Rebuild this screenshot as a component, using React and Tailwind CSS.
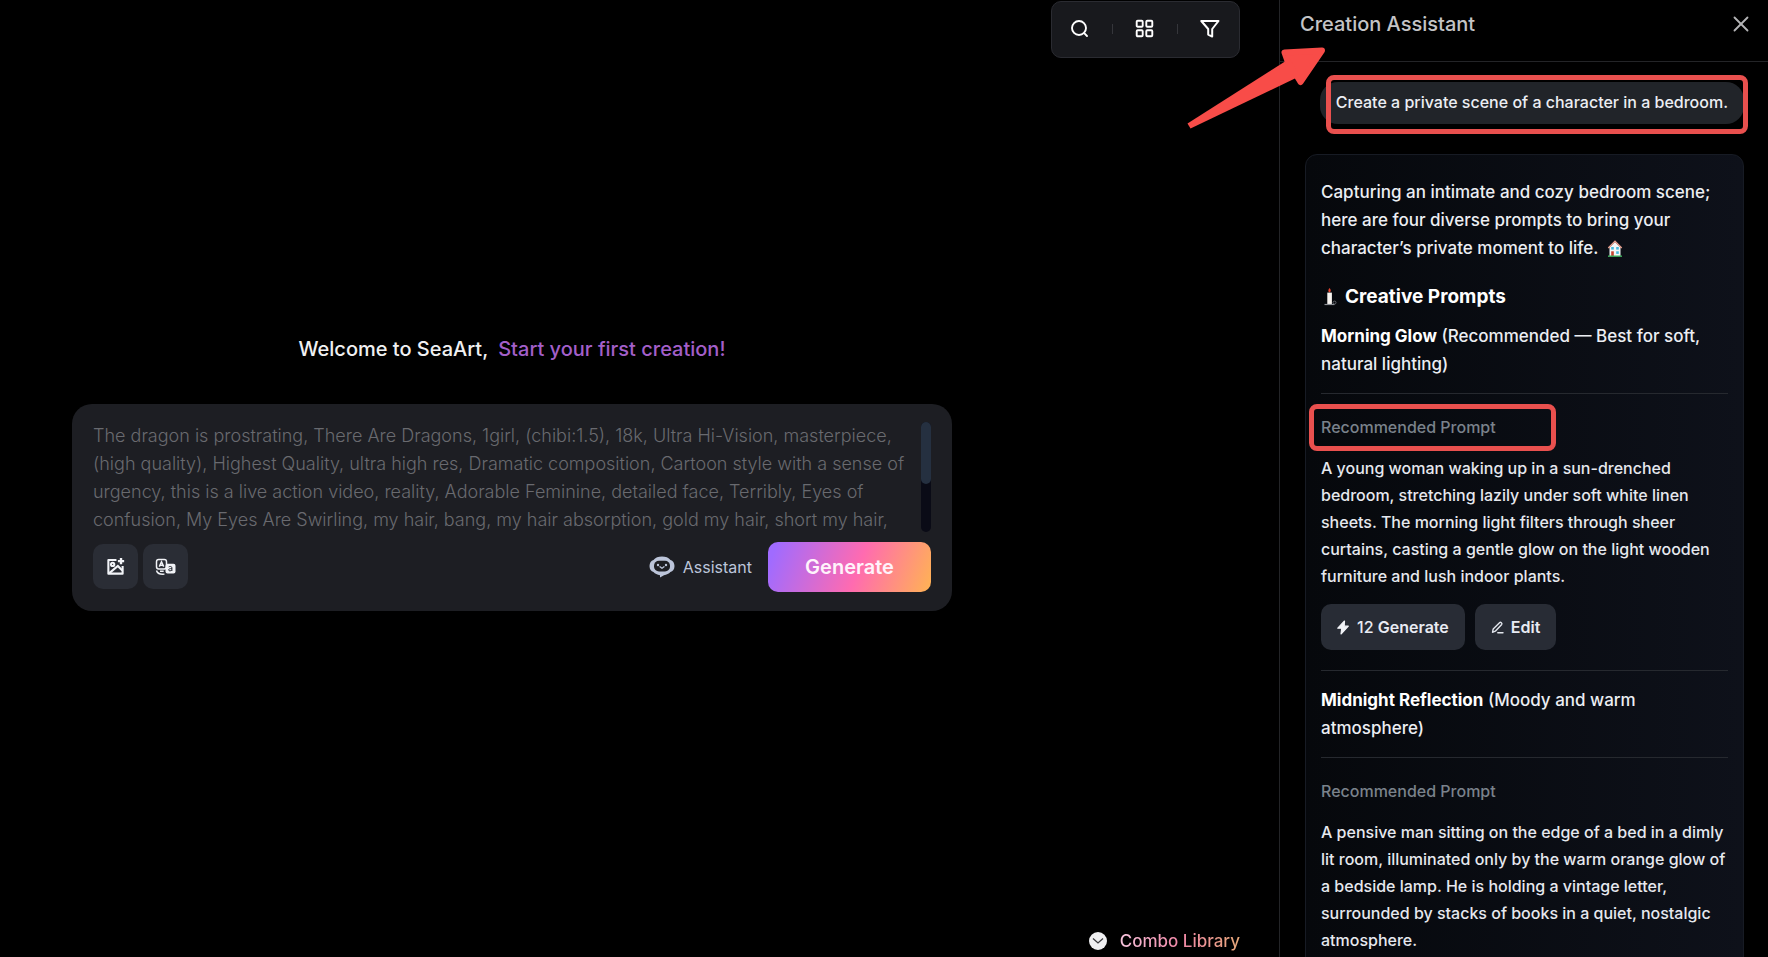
import React, { useState } from "react";
import { X } from "lucide-react";

const placeholder =
  "The dragon is prostrating, There Are Dragons, 1girl, (chibi:1.5), 18k, Ultra Hi-Vision, masterpiece, (high quality), Highest Quality, ultra high res, Dramatic composition, Cartoon style with a sense of urgency, this is a live action video, reality, Adorable Feminine, detailed face, Terribly, Eyes of confusion, My Eyes Are Swirling, my hair, bang, my hair absorption, gold my hair, short my hair,";

const SearchIcon = () => (
  <svg width="20" height="20" viewBox="0 0 20 20" fill="none" stroke="#fff" strokeWidth="1.9" strokeLinecap="round">
    <circle cx="9" cy="9" r="7" />
    <path d="M14.2 14.2 17 17" />
  </svg>
);

const GridIcon = () => (
  <svg width="20" height="20" viewBox="0 0 20 20" fill="none" stroke="#fff" strokeWidth="1.9">
    <rect x="1.7" y="1.7" width="6" height="6" rx="1" />
    <rect x="11.3" y="1.7" width="6" height="6" rx="1" />
    <rect x="1.7" y="11.3" width="6" height="6" rx="1" />
    <rect x="11.3" y="11.3" width="6" height="6" rx="1" />
  </svg>
);

const FilterIcon = () => (
  <svg width="20" height="20" viewBox="0 0 20 20" fill="none" stroke="#fff" strokeWidth="2" strokeLinejoin="round">
    <path d="M1.3 2h17.2l-6.3 8v7.600l-4-2V10z" />
  </svg>
);

const ImagePlusIcon = () => (
  <svg width="19" height="19" viewBox="0 0 20 20" fill="none" stroke="#f1f3f7" strokeWidth="2.2">
    <path d="M11 3.2H2.5v14.300h15V9.500" strokeLinejoin="round" />
    <circle cx="7" cy="7.800" r="1.700" />
    <path d="M3.500 17 12.500 9.500 17.200 14.200" />
    <path d="M15.800 1v6.600M12.500 4.300h6.600" strokeWidth="2.500" />
  </svg>
);

const TranslateIcon = () => (
  <svg width="22" height="18" viewBox="0 0 22 18" fill="none">
    <rect x="1.500" y="1.500" width="10" height="9.500" rx="2.200" stroke="#f1f3f7" strokeWidth="1.500" />
    <path d="M4.300 8.600 6.500 3.800l2.200 4.800M5.100 7.200h2.800" stroke="#f1f3f7" strokeWidth="1.500" />
    <rect x="10.500" y="5.800" width="10" height="9.600" rx="2" fill="#f1f3f7" />
    <path d="M13.700 8.900c1-.7 3.200-.7 3.200.9v3.200M16.900 10.600c-2-.1-3.300.3-3.300 1.300 0 1.300 2.400 1.300 3.300 0" stroke="#2a2d35" strokeWidth="1" />
    <path d="M1.500 12.500c.5 2.400 3.500 4 8 3.600M8.700 13.200H5" stroke="#f1f3f7" strokeWidth="1.400" />
  </svg>
);

const RobotIcon = () => (
  <svg width="26" height="22" viewBox="0 0 26 22">
    <path
      d="M13 .6c3.600 0 6.700 1.200 8.500 3.300 2.400.6 4 3 4 6.100s-1.600 5.400-4.100 6.100c-1.500 1.700-3.800 2.800-6.400 3.200L11 21.600V19.300c-2.700-.4-5-1.500-6.500-3.200C2.100 15.400.5 13.100.5 10s1.600-5.500 4-6.100C6.300 1.800 9.400.6 13 .6z"
      fill="#bcc5da"
    />
    <rect x="5" y="4.700" width="16" height="10.800" rx="5" fill="#1d1e23" />
    <circle cx="9" cy="9" r="1.200" fill="#bcc5da" />
    <circle cx="17" cy="9" r="1.200" fill="#bcc5da" />
    <path d="M11 10.800 13 12.300 15 10.800" stroke="#bcc5da" strokeWidth="1.400" fill="none" strokeLinecap="round" strokeLinejoin="round" />
  </svg>
);

const BoltIcon = () => (
  <svg width="12" height="15" viewBox="0 0 12 15" fill="#f1f3f7" stroke="#f1f3f7" strokeWidth="1.200" strokeLinejoin="round">
    <path d="M7.500 1 .8 8.200h4L4 14 11.300 6.200H7.200z" />
  </svg>
);

const PencilIcon = () => (
  <svg width="13" height="13" viewBox="0 0 13 13" fill="none" stroke="#e2e5ec" strokeWidth="1.400" strokeLinejoin="round" strokeLinecap="round">
    <path d="M1.500 11.300 2.200 8 8.800 1.500c.8-.7 2.700.9 1.900 1.900L4.300 10.200z" />
    <path d="M6.800 11.800H12" />
  </svg>
);

const HouseIcon = () => (
  <svg width="16" height="17" viewBox="0 0 16 17" className="ml-1 inline-block align-[-3px]">
    <path d="M2.500 7.500 8 2l5.500 5.500V16h-11z" fill="#f4f6f6" />
    <path d="M1.300 8 8 1.200 14.700 8" stroke="#e9a08f" strokeWidth="1.400" fill="none" />
    <rect x="4.200" y="7" width="2.600" height="2.600" fill="#47b8dc" />
    <rect x="9.200" y="7" width="2.600" height="2.600" fill="#47b8dc" />
    <rect x="4.200" y="11.300" width="2.600" height="4.700" fill="#c8412f" />
    <rect x="9.200" y="11.300" width="2.600" height="2.600" fill="#47b8dc" />
    <path d="M1 16.200h14" stroke="#3fae5c" strokeWidth="1.400" />
  </svg>
);

const CandleIcon = () => (
  <svg width="16" height="18" viewBox="0 0 16 18">
    <path d="M8.500 0c1.600 1.800 1.700 3.600 0 4.400-1.700-.8-1.400-2.600 0-4.400z" fill="#e5452f" />
    <rect x="6.300" y="4.600" width="4.600" height="11.400" fill="#f7f3ef" />
    <path d="M3.500 16.500h10" stroke="#8c8f95" strokeWidth="1.200" />
    <circle cx="13.500" cy="14.600" r="1.500" stroke="#74777d" strokeWidth=".8" fill="none" />
  </svg>
);

const HighlightBox = ({ className }) => (
  <span className={`pointer-events-none absolute rounded-lg border-[5px] border-[#e9504e] ${className}`} />
);

const Toolbar = () => (
  <div className="mt-px flex h-[57px] items-center gap-[22px] rounded-[10px] border border-[#2a2b31] bg-[#18191d] pr-[19px] pb-[2px] pl-[18px]">
    <button aria-label="Search">
      <SearchIcon />
    </button>
    <span className="h-[10px] w-px bg-[#35363b]" />
    <button aria-label="Layout">
      <GridIcon />
    </button>
    <span className="h-[10px] w-px bg-[#35363b]" />
    <button aria-label="Filter">
      <FilterIcon />
    </button>
  </div>
);

const PromptBox = () => {
  const [prompt, setPrompt] = useState("");

  return (
    <div className="w-full rounded-[20px] bg-[#1d1e23] px-[21px] pt-[18px] pb-[19px]">
      <div className="flex h-[110px]">
        <textarea
          aria-label="Prompt"
          value={prompt}
          onChange={(e) => setPrompt(e.target.value)}
          placeholder={placeholder}
          className="h-full min-w-0 flex-1 resize-none overflow-hidden bg-transparent text-[18px] leading-[28px] font-light text-gray-100 outline-none placeholder:text-[#696a6f]"
        />
        <div className="h-full w-[10px] rounded-full bg-[#0a0b16]">
          <div className="h-[62px] rounded-full bg-[#253040]" />
        </div>
      </div>
      <div className="mt-[10px] flex items-center">
        <div className="flex gap-[5px]">
          <button aria-label="Add image" className="flex size-[45px] items-center justify-center rounded-[10px] bg-[#2a2d35]">
            <ImagePlusIcon />
          </button>
          <button aria-label="Translate" className="flex size-[45px] items-center justify-center rounded-[10px] bg-[#2a2d35]">
            <TranslateIcon />
          </button>
        </div>
        <button className="ml-auto flex items-center gap-2 text-[16px] text-[#bcc5da]">
          <RobotIcon />
          Assistant
        </button>
        <button className="ml-4 h-[50px] w-[163px] rounded-[10px] bg-[linear-gradient(110deg,#a06bff_5%,#ff6bb0_55%,#ffb057_98%)] text-[20px] font-semibold text-[#fff3fb]">
          Generate
        </button>
      </div>
    </div>
  );
};

const Suggestion = ({ title, note, text, highlighted, actions }) => (
  <section>
    <h4 className="text-[17px] leading-[28px] font-medium text-[#eceef3]">
      <strong className="font-bold text-white">{title}</strong> <span>{note}</span>
    </h4>
    <hr className="mt-[15px] border-[#26292f]" />
    <div className="relative mt-[21px]">
      <p className="text-[16px] leading-[24px] font-medium text-[#7a828b]">Recommended Prompt</p>
      {highlighted && <HighlightBox className="-top-[11px] -left-3 h-[47px] w-[247px]" />}
    </div>
    <p className="mt-4 text-[16px] leading-[27px] font-medium text-[#e6e8ee]">{text}</p>
    {actions && (
      <div className="mt-[14px] flex gap-[10px]">
        <button className="flex h-[46px] items-center gap-2 rounded-[10px] bg-[#282c35] px-4 text-[16px] font-medium text-[#e8ebf3]">
          <BoltIcon />
          <span>
            12 <span className="font-semibold">Generate</span>
          </span>
        </button>
        <button className="flex h-[46px] items-center gap-[7px] rounded-[10px] bg-[#282c35] px-4 text-[16px] font-semibold text-[#e8ebf3]">
          <PencilIcon />
          Edit
        </button>
      </div>
    )}
  </section>
);

const AssistantPanel = () => (
  <aside className="flex w-[489px] shrink-0 flex-col border-l border-[#232427]">
    <header className="relative flex h-[62px] shrink-0 items-center justify-between border-b border-[#232427] pr-[14px] pb-[14px] pl-5">
      <h2 className="text-[20px] leading-7 font-medium text-[#c4c4c6]">Creation Assistant</h2>
      <button aria-label="Close" className="text-[#b4b4b6]">
        <X size={26} strokeWidth={1.7} />
      </button>
      <svg
        width="140"
        height="84"
        viewBox="0 0 140 84"
        className="pointer-events-none absolute top-[46px] -left-[93px] z-10"
        fill="#f84c48"
        stroke="#f84c48"
      >
        <path d="M.5 77.500 98 15.500 110 31.500 3.500 82.500z" stroke="none" />
        <path d="M97.500 6.500 135 4.500 113.500 36 108 27 100.500 15z" strokeWidth="6" strokeLinejoin="round" />
      </svg>
    </header>
    <div className="min-h-0 flex-1 overflow-hidden pt-5 pr-6 pl-[25px]">
      <div className="relative ml-auto flex h-[42px] w-fit items-center rounded-[18px] bg-[#212429] px-4 pb-[2px]">
        <p className="text-[16px] font-medium text-[#eceef3]">Create a private scene of a character in a bedroom.</p>
        <HighlightBox className="-top-[7px] -right-1 h-[59px] w-[422px]" />
      </div>
      <article className="mt-[30px] rounded-xl border border-[#171b24] bg-linear-to-r from-[#06080c] to-[#0e111a] px-[15px] pt-[23px] pb-6">
        <p className="text-[17px] leading-[28px] font-medium text-[#eceef3]">
          Capturing an intimate and cozy bedroom scene; here are four diverse prompts to bring your character’s private
          moment to life. <HouseIcon />
        </p>
        <h3 className="mt-[21px] mb-[11px] flex items-center gap-2 text-[19px] leading-[28px] font-bold text-white">
          <CandleIcon />
          Creative Prompts
        </h3>
        <Suggestion
          title="Morning Glow"
          note="(Recommended — Best for soft, natural lighting)"
          text="A young woman waking up in a sun-drenched bedroom, stretching lazily under soft white linen sheets. The morning light filters through sheer curtains, casting a gentle glow on the light wooden furniture and lush indoor plants."
          highlighted
          actions
        />
        <hr className="mt-5 mb-[15px] border-[#26292f]" />
        <Suggestion
          title="Midnight Reflection"
          note="(Moody and warm atmosphere)"
          text="A pensive man sitting on the edge of a bed in a dimly lit room, illuminated only by the warm orange glow of a bedside lamp. He is holding a vintage letter, surrounded by stacks of books in a quiet, nostalgic atmosphere."
        />
      </article>
    </div>
  </aside>
);

const App = () => {
  return (
    <div className="flex h-screen overflow-hidden bg-black font-['Inter',sans-serif] text-white">
      <main className="flex min-w-0 flex-1">
        <section className="flex min-w-0 flex-1 flex-col items-center justify-center px-[72px] pb-3">
          <h1 className="mb-[41px] flex gap-[10px] text-[20px] leading-7 font-medium">
            <span className="text-[#f0f0f2]">Welcome to SeaArt,</span>
            <span className="text-[#a35fc9]">Start your first creation!</span>
          </h1>
          <PromptBox />
        </section>
        <div className="flex w-[255px] shrink-0 flex-col items-end justify-between pr-[39px] pb-[3px]">
          <Toolbar />
          <a href="#combo" className="flex items-center gap-[13px] text-[17px] leading-[26px] font-medium">
            <svg width="18" height="18" viewBox="0 0 18 18">
              <circle cx="9" cy="9" r="9" fill="#efeff1" />
              <path d="M4 6.500 9 11 14 6.500" fill="none" stroke="#3a3a3e" strokeWidth="1.300" />
            </svg>
            <span className="bg-linear-to-r from-[#f5c3dc] via-[#ef86a6] to-[#e8a878] bg-clip-text text-transparent">
              Combo Library
            </span>
          </a>
        </div>
      </main>
      <AssistantPanel />
    </div>
  );
};

export default App;
